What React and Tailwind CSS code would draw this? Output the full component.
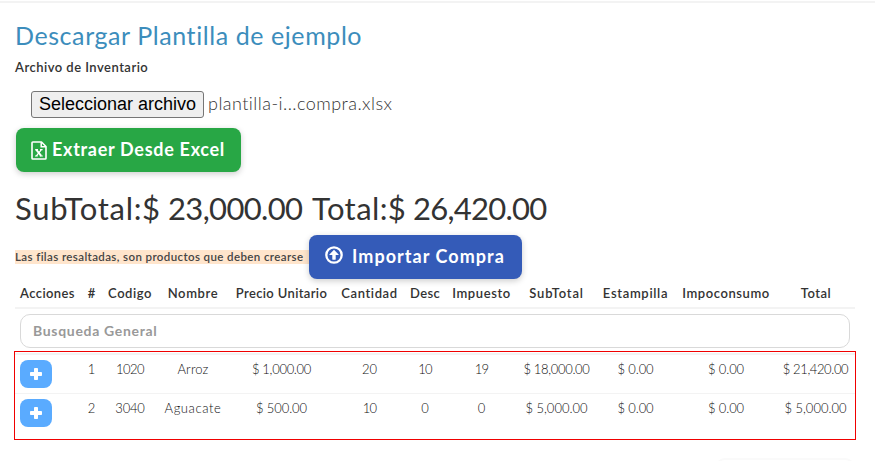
import React from 'react';

const columns = [
  { label: 'Acciones', cls: 'w-[65px] tracking-[0.4px]' },
  { label: '#', cls: 'w-[23px]' },
  { label: 'Codigo', cls: 'w-[54px] tracking-[0.53px]' },
  { label: 'Nombre', cls: 'w-[72px] tracking-[0.64px]' },
  { label: 'Precio Unitario', cls: 'w-[105px] tracking-[0.36px]' },
  { label: 'Cantidad', cls: 'w-[71px] tracking-[0.6px]' },
  { label: 'Desc', cls: 'w-[40px] tracking-[0.32px]' },
  { label: 'Impuesto', cls: 'w-[73px] tracking-[0.59px]' },
  { label: 'SubTotal', cls: 'w-[77px] tracking-[0.82px]' },
  { label: 'Estampilla', cls: 'w-[81px] tracking-[0.68px]' },
  { label: 'Impoconsumo', cls: 'w-[100px] tracking-[0.58px]' },
  { label: 'Total', cls: 'w-[79px] pl-px tracking-[0.55px]' },
];

const rows = [
  [
    { text: '1' },
    { text: '1020', cls: 'tracking-[-0.5px]' },
    { text: 'Arroz', cls: 'tracking-[0.2px]' },
    { text: '$ 1,000.00', cls: 'tracking-[-0.3px]' },
    { text: '20' },
    { text: '10', cls: 'tracking-[-0.8px]' },
    { text: '19', cls: 'tracking-[-0.8px]' },
    { text: '$ 18,000.00', cls: 'tracking-[-0.33px]' },
    { text: '$ 0.00', cls: 'tracking-[-0.1px]' },
    { text: '$ 0.00', cls: 'tracking-[-0.1px]' },
    { text: '$ 21,420.00', cls: 'tracking-[-0.4px]' },
  ],
  [
    { text: '2' },
    { text: '3040', cls: 'tracking-[-0.2px]' },
    { text: 'Aguacate', cls: 'tracking-[0.6px]' },
    { text: '$ 500.00', cls: 'tracking-[-0.1px]' },
    { text: '10', cls: 'tracking-[-0.8px]' },
    { text: '0' },
    { text: '0' },
    { text: '$ 5,000.00' },
    { text: '$ 0.00', cls: 'tracking-[-0.1px]' },
    { text: '$ 0.00', cls: 'tracking-[-0.1px]' },
    { text: '$ 5,000.00' },
  ],
];

function ExcelIcon() {
  return (
    <svg className="h-[19px] w-4 shrink-0" viewBox="0 0 16 19" fill="none" stroke="currentColor">
      <path d="M1 1.8q0-.8.8-.8H10.500l4.500 4.500v11.700q0 .8-.8.8H1.800q-.8 0-.8-.8z" strokeWidth="1.600" strokeLinejoin="round" />
      <path d="M10.200 1v4.800H15" strokeWidth="1.500" />
      <path d="M5.200 8.700l5 6.200" strokeWidth="1.900" />
      <path d="M10.400 8.700l-5 6.200M4.200 8.600h2.800M9 8.600h2.600M4 15h2.800M8.800 15h3" strokeWidth="1.200" />
    </svg>
  );
}

function UploadIcon() {
  return (
    <svg className="-mt-[5px] h-[18px] w-[18px] shrink-0" viewBox="0 0 18 18">
      <circle cx="9" cy="9" r="7.700" fill="none" stroke="currentColor" strokeWidth="2.300" />
      <path fill="currentColor" d="M9 3.800l4.600 4.700q.3.500-.3.500H10.700v4.300q0 .4-.4.400H7.700q-.4 0-.4-.4V9H4.700q-.6 0-.3-.5z" />
    </svg>
  );
}

function PlusIcon() {
  return (
    <svg className="h-3 w-3" viewBox="0 0 12 12" fill="currentColor">
      <rect x="0" y="4" width="12" height="4" rx="0.800" />
      <rect x="4" y="0" width="4" height="12" rx="0.800" />
    </svg>
  );
}

export default function App() {
  return (
    <div className="h-[461px] overflow-hidden bg-white font-['Lato',sans-serif] text-[#333]">
      <div className="h-[3px] border-b-2 border-[#f3f3f3]" />

      <main className="ml-[15px] w-[840px]">
        <h3 className="pt-[15px] text-[25px] leading-[34px] tracking-[0.58px] whitespace-nowrap text-[#3c8dbc]">
          Descargar Plantilla de ejemplo
        </h3>
        <p className="mt-[5px] text-[13px] leading-[20px] font-semibold tracking-[0.48px]">Archivo de Inventario</p>

        <div className="mt-[14px] ml-4 flex h-[27px] items-center">
          <button className="h-[27px] w-[173px] rounded-[3px] border border-[#767676] bg-[#efefef] font-['Liberation_Sans',sans-serif] text-[18px] leading-[25px] whitespace-nowrap text-black">
            Seleccionar archivo
          </button>
          <span className="ml-1 pb-0.5 text-[18px] leading-[25px] font-light tracking-[0.46px]">plantilla-i...compra.xlsx</span>
        </div>

        <button className="mt-[10px] ml-px flex h-11 w-[225px] items-center gap-[5px] rounded-lg bg-[#28a745] pl-[15px] text-[18px] font-bold tracking-[0.7px] whitespace-nowrap text-white shadow-[0_2px_6px_rgba(0,0,0,0.2)]">
          <ExcelIcon />
          <span className="pb-px">Extraer Desde Excel</span>
        </button>

        <h2 className="mt-[15px] flex h-[42px] items-center gap-[9px] text-[31px] leading-[42px] whitespace-nowrap">
          <span className="w-[144px] tracking-[0.7px]">SubTotal:$</span>
          <span className="w-[135px] tracking-[-0.65px]">23,000.00</span>
          <span className="w-[92px] tracking-[0.4px]">Total:$</span>
          <span className="tracking-[-0.75px]">26,420.00</span>
        </h2>

        <div className="mt-[6px] flex h-11 items-center">
          <span className="h-[14px] w-[294px] bg-[#ffe5cc] text-[11.5px] leading-[13px] font-semibold tracking-[0.39px] whitespace-nowrap text-[#444]">
            Las filas resaltadas, son productos que deben crearse
          </span>
          <button className="flex h-11 w-[213px] items-center gap-[9px] rounded-lg bg-[#345bb8] pl-4 text-[18px] font-bold tracking-[1.05px] whitespace-nowrap text-white shadow-[0_2px_6px_rgba(0,0,0,0.2)]">
            <UploadIcon />
            <span className="pb-px">Importar Compra</span>
          </button>
        </div>

        <div className="flex h-[30px] items-center border-b-2 border-[#f3f3f3] pt-0.5 text-center text-[13px] font-semibold">
          {columns.map((col) => (
            <div key={col.label} className={`${col.cls} shrink-0 whitespace-nowrap`}>{col.label}</div>
          ))}
        </div>

        <div className="px-[5px] pt-[5px] pb-[3px]">
          <input
            className="block h-[34px] w-full rounded-[10px] border border-[#d9d9d9] bg-white px-3 pb-0.5 text-[14px] font-bold tracking-[0.68px] placeholder:text-[#999]"
            placeholder="Busqueda General"
          />
        </div>

        <div className="-mx-px h-[89px] w-[842px] border border-[#f00000] pt-px">
          {rows.map((row, i) => (
            <div
              key={i}
              className={`flex text-center text-[13px] leading-[18px] font-light text-[#111] ${i === 0 ? 'h-10 border-t-2 border-[#f3f3f3] pt-[5px]' : 'h-10 border-t border-[#f3f3f3] pt-[5px]'}`}
            >
              <div className="w-[65px] shrink-0 pl-[5px]">
                <button className="flex h-7 w-8 items-center justify-center rounded-lg bg-[#5aabff] pr-px text-white">
                  <PlusIcon />
                </button>
              </div>
              {row.map((cell, j) => (
                <div key={j} className={`${columns[j + 1].cls.split(' ')[0]} shrink-0 whitespace-nowrap`}>
                  <span className={cell.cls}>{cell.text}</span>
                </div>
              ))}
            </div>
          ))}
        </div>

        <div className="mt-[18px] ml-auto h-10 w-[140px] rounded-[10px] border-2 border-[#fafafa]" />
      </main>
    </div>
  );
}
